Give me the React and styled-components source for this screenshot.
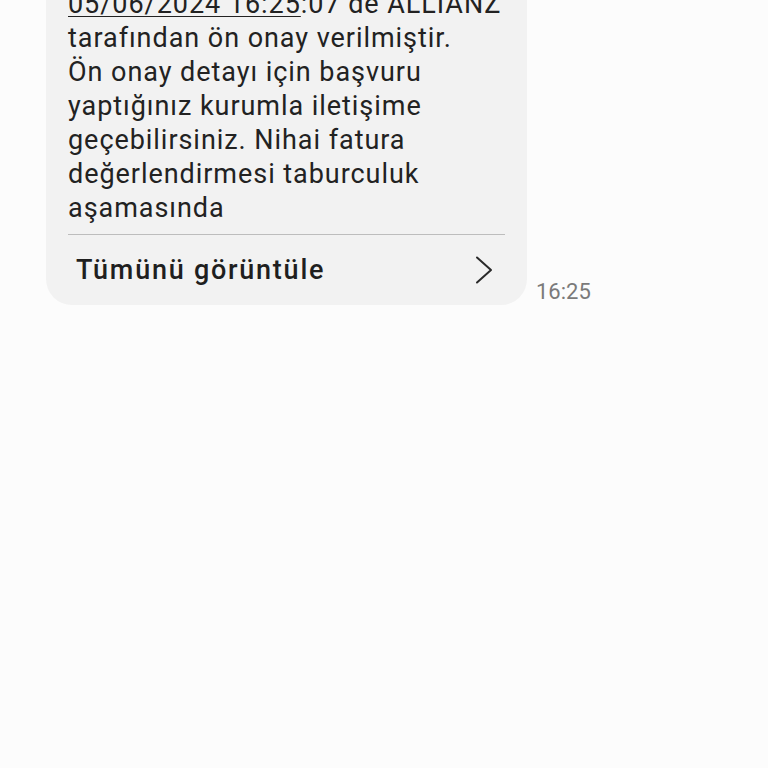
import React from 'react'
import styled, { createGlobalStyle } from 'styled-components'

const Global = createGlobalStyle`
  html, body {
    margin: 0;
    padding: 0;
    background: #fcfcfc;
    font-family: Roboto, "Noto Sans", sans-serif;
  }
`

const Page = styled.div`
  width: 768px;
  height: 768px;
  overflow: hidden;
  background: #fcfcfc;
`

const MessageRow = styled.div`
  display: flex;
  align-items: flex-end;
  gap: 9px;
  margin-top: -27px;
  padding-left: 46px;
`

const Bubble = styled.div`
  width: 481px;
  box-sizing: border-box;
  background: #f2f2f2;
  border-radius: 26px;
  padding: 14px 22px 0 22px;
`

const Body = styled.div`
  font-size: 27px;
  line-height: 34px;
  letter-spacing: 0.95px;
  color: #222;
  padding-bottom: 9px;
  border-bottom: 1px solid #bdbdbd;
`

const DateLink = styled.span`
  text-decoration: underline;
  text-decoration-thickness: 1px;
  text-underline-offset: 3px;
`

const Footer = styled.div`
  display: flex;
  align-items: center;
  justify-content: space-between;
  height: 70px;
  padding: 0 12px 0 8px;
`

const FooterLabel = styled.span`
  font-size: 27px;
  font-weight: 500;
  letter-spacing: 1.75px;
  color: #1f1f1f;
`

const Time = styled.span`
  font-size: 22px;
  color: #7a7a7a;
  padding-bottom: 1px;
`

const Chevron = () => (
  <svg width="18" height="28" viewBox="0 0 18 28" fill="none">
    <path d="M2 1.5 L16 14 L2 26.5" stroke="#2a2a2a" strokeWidth="2" strokeLinecap="round" strokeLinejoin="round" />
  </svg>
)

export default function App() {
  return (
    <Page>
      <Global />
      <MessageRow>
        <Bubble>
          <Body>
            <DateLink>05/06/2024 16:25</DateLink>:07 de ALLIANZ
            <br />
            tarafından ön onay verilmiştir.
            <br />
            Ön onay detayı için başvuru
            <br />
            yaptığınız kurumla iletişime
            <br />
            geçebilirsiniz. Nihai fatura
            <br />
            değerlendirmesi taburculuk
            <br />
            aşamasında
          </Body>
          <Footer>
            <FooterLabel>Tümünü görüntüle</FooterLabel>
            <Chevron />
          </Footer>
        </Bubble>
        <Time>16:25</Time>
      </MessageRow>
    </Page>
  )
}
